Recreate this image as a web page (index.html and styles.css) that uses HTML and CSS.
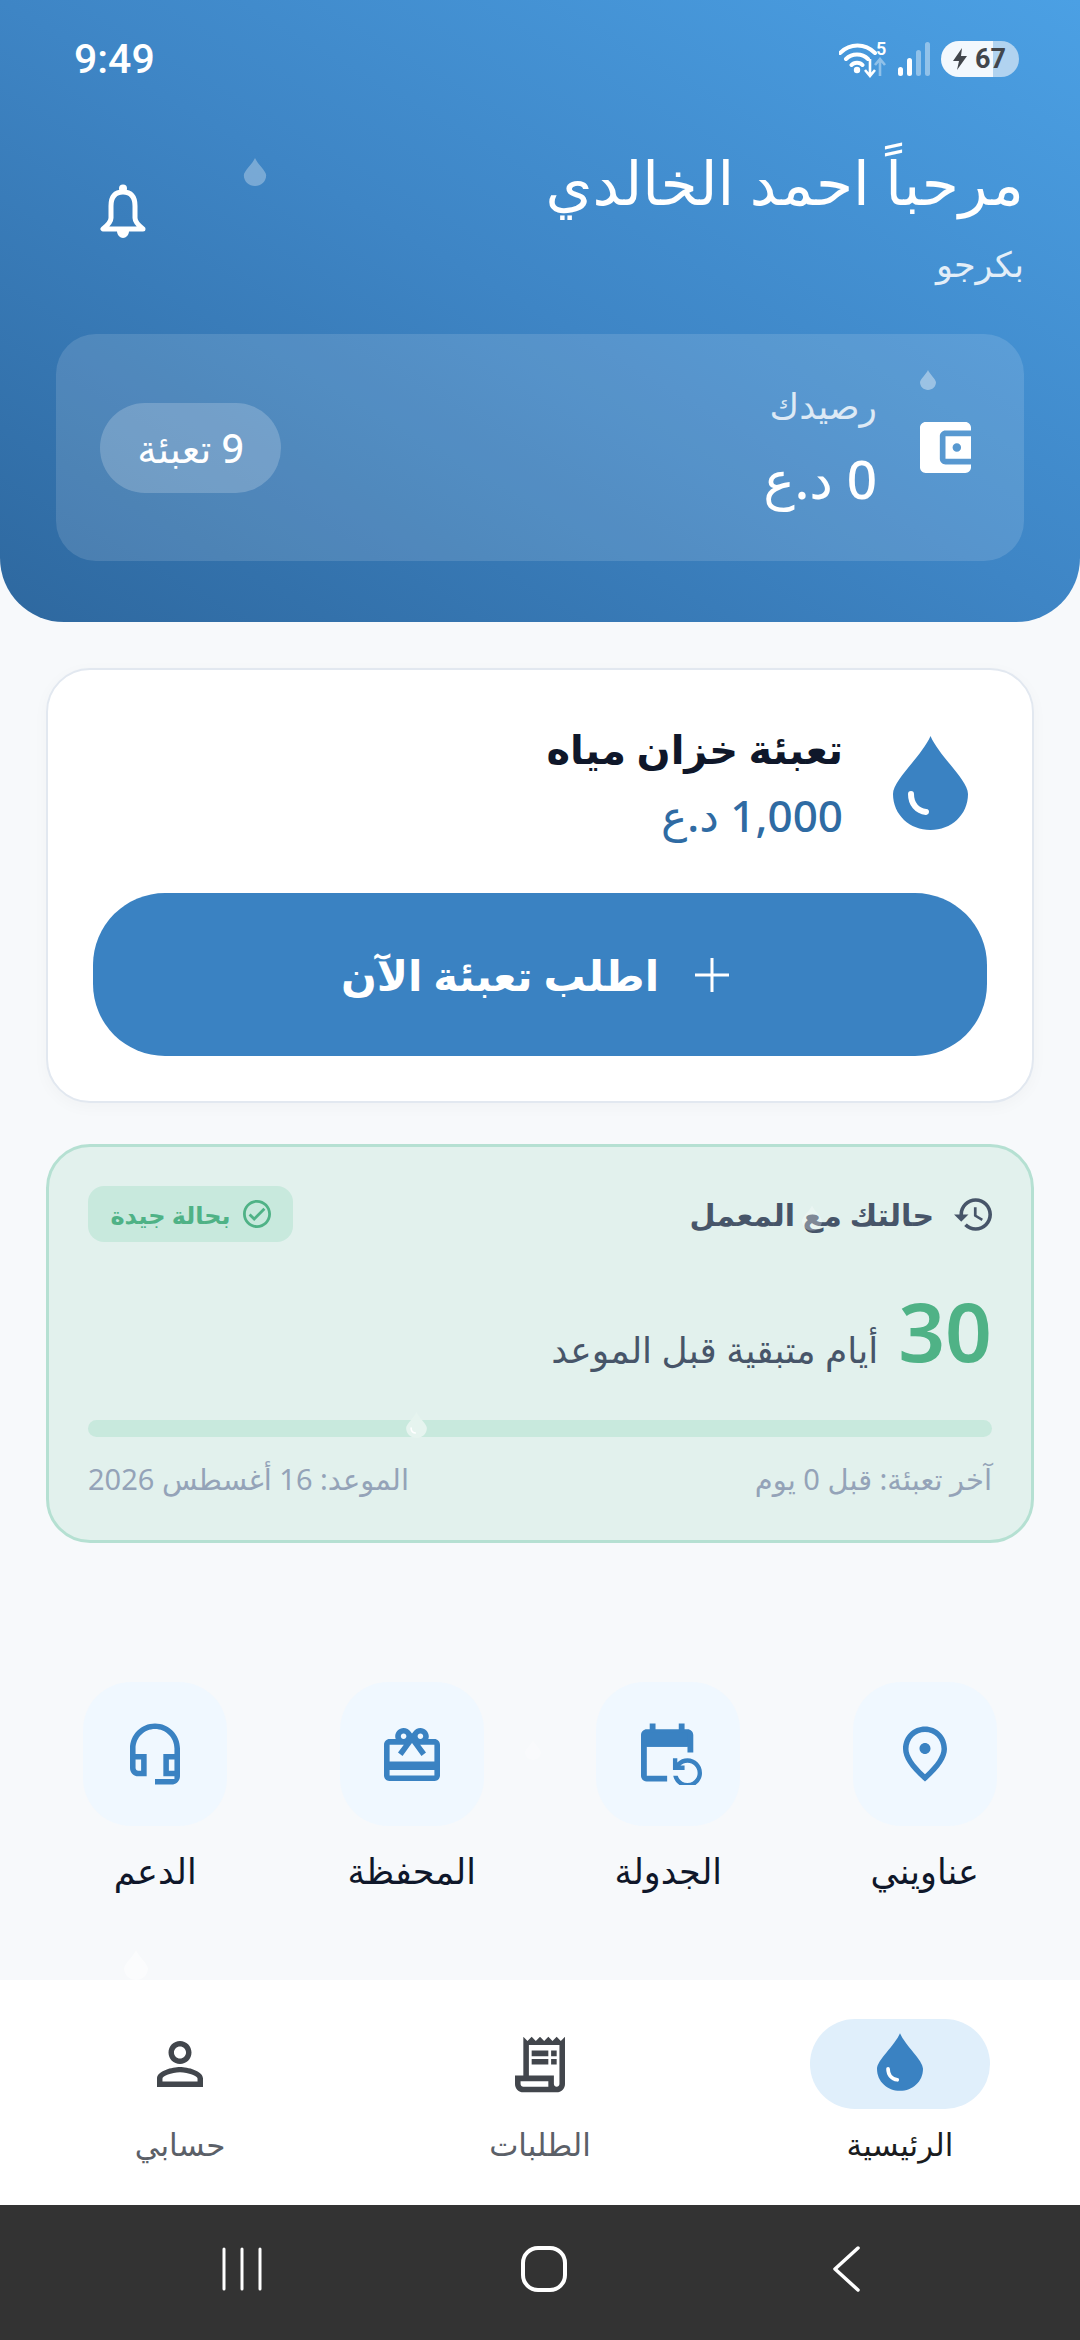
FILE: index.html

```html
<!DOCTYPE html>
<html lang="ar" dir="rtl">
<head>
    <meta charset="UTF-8">
    <meta name="viewport" content="width=device-width, initial-scale=1.0">
    <title>الرئيسية</title>
    <link rel="stylesheet" href="styles.css">
</head>
<body>
    <svg class="defs" width="0" height="0" aria-hidden="true">
        <symbol id="drop" viewBox="0 0 75 94">
            <path fill="currentColor" d="M37.5 0C46 20 75 44 75 58 75 79 58 94 37.5 94 17 94 0 79 0 58 0 44 29 20 37.5 0Z"/>
            <path class="drop-shine" d="M18 58C18 68 24 75 33 76"/>
        </symbol>
    </svg>

    <div class="app">
        <!-- الهيدر -->
        <header class="hero">
            <div class="status-bar">
                <div class="time">9:49</div>
                <div class="status-icons">
                    <svg class="ic-wifi" viewBox="0 0 50 38">
                        <path d="M1 13C11 3 26 3 36 13M7 19C13 13 23 13 29 19M12.500 25C15 22 21 22 23.500 25" fill="none" stroke="#fff" stroke-width="4" stroke-linecap="round"/>
                        <circle cx="18" cy="30" r="3.200" fill="#fff"/>
                        <path d="M31 19V36M26 30L31 36 36 30" fill="none" stroke="#fff" stroke-width="2.600"/>
                        <path d="M41 36V20M36 25L41 19 46 25" fill="none" stroke="#fff" stroke-opacity=".4" stroke-width="2.600"/>
                    </svg>
                    <span class="wifi-num">5</span>
                    <svg class="ic-signal" viewBox="0 0 32 34">
                        <rect x="0" y="25" width="5" height="9" rx="2.500" fill="#fff"/>
                        <rect x="9" y="16" width="5" height="18" rx="2.500" fill="#fff"/>
                        <rect x="18" y="8" width="5" height="26" rx="2.500" fill="#fff" fill-opacity=".4"/>
                        <rect x="27" y="0" width="5" height="34" rx="2.500" fill="#fff" fill-opacity=".4"/>
                    </svg>
                    <div class="battery">
                        <svg class="ic-bolt" viewBox="0 0 14 22"><path d="M9 0L0 13H6L4 22 14 8H8L9 0Z"/></svg>
                        <span>67</span>
                    </div>
                </div>
            </div>

            <div class="greeting">
                <div>
                    <div class="hello">مرحباً احمد الخالدي</div>
                    <div class="city">بكرجو</div>
                </div>
                <svg class="ic-bell" viewBox="0 0 46 54">
                    <path d="M23 8C14 8 11 14 11 22V34C11 38 8 41 3 45H43C38 41 35 38 35 34V22C35 14 32 8 23 8Z" fill="none" stroke="#fff" stroke-width="5" stroke-linejoin="round"/>
                    <circle cx="23" cy="4.500" r="4" fill="#fff"/>
                    <path d="M17 47H29C29 51 26 54 23 54 20 54 17 51 17 47Z" fill="#fff"/>
                </svg>
            </div>

            <div class="balance">
                <div class="balance-main">
                    <svg class="ic-wallet" viewBox="3 3 18 18"><path fill="#fff" d="M21 18v1c0 1.100-.9 2-2 2H5c-1.110 0-2-.9-2-2V5c0-1.100.89-2 2-2h14c1.100 0 2 .9 2 2v1h-9c-1.110 0-2 .9-2 2v8c0 1.100.89 2 2 2h9zm-9-2h9V8h-9v8zm4-2.500c-.83 0-1.500-.67-1.500-1.500s.67-1.500 1.500-1.500 1.500.67 1.500 1.500-.67 1.500-1.500 1.500z"/></svg>
                    <div>
                        <div class="balance-label">رصيدك</div>
                        <div class="balance-value">0 د.ع</div>
                    </div>
                </div>
                <div class="refills">9 تعبئة</div>
            </div>

            <svg class="float-drop fd-1"><use href="#drop"/></svg>
            <svg class="float-drop fd-2"><use href="#drop"/></svg>
        </header>

        <main class="content">
            <!-- بطاقة التعبئة -->
            <section class="card order-card">
                <div class="order-info">
                    <svg class="order-drop"><use href="#drop"/></svg>
                    <div>
                        <div class="order-title">تعبئة خزان مياه</div>
                        <div class="order-price">1,000 د.ع</div>
                    </div>
                </div>
                <button class="order-btn">
                    <svg class="ic-plus" viewBox="0 0 34 34"><path d="M17 0V34M0 17H34" stroke="#fff" stroke-width="3" fill="none"/></svg>
                    <span>اطلب تعبئة الآن</span>
                </button>
            </section>

            <!-- حالة العميل -->
            <section class="status-card">
                <div class="status-head">
                    <div class="status-title">
                        <svg viewBox="1 3 21 18"><path fill="#475569" d="M13 3c-4.970 0-9 4.030-9 9H1l3.890 3.890.07.14L9 12H6c0-3.870 3.130-7 7-7s7 3.130 7 7-3.130 7-7 7c-1.930 0-3.680-.79-4.940-2.060l-1.420 1.420C8.270 19.990 10.510 21 13 21c4.970 0 9-4.030 9-9s-4.030-9-9-9zm-1 5v5l4.280 2.540.72-1.210-3.500-2.080V8H12z"/></svg>
                        <span>حالتك مع المعمل</span>
                    </div>
                    <div class="status-badge">
                        <svg viewBox="2 2 20 20"><path fill="#4fb286" d="M12 2C6.480 2 2 6.480 2 12s4.480 10 10 10 10-4.480 10-10S17.520 2 12 2zm0 18c-4.410 0-8-3.590-8-8s3.590-8 8-8 8 3.590 8 8-3.590 8-8 8zm4.590-12.420L10 14.170l-2.590-2.580L6 13l4 4 8-8z"/></svg>
                        <span>بحالة جيدة</span>
                    </div>
                </div>
                <div class="days">
                    <span class="days-num">30</span>
                    <span class="days-text">أيام متبقية قبل الموعد</span>
                </div>
                <div class="progress"><svg class="progress-drop"><use href="#drop"/></svg></div>
                <div class="status-foot">
                    <span>آخر تعبئة: قبل 0 يوم</span>
                    <span>الموعد: 16 أغسطس 2026</span>
                </div>
                <svg class="float-drop fd-3"><use href="#drop"/></svg>
            </section>

            <!-- الاختصارات -->
            <nav class="quick">
                <div class="quick-item">
                    <div class="tile"><svg viewBox="4 2 16 20" class="ic-place"><path d="M12 12c-1.100 0-2-.9-2-2s.9-2 2-2 2 .9 2 2-.9 2-2 2zm6-1.800C18 6.570 15.350 4 12 4s-6 2.570-6 6.200c0 2.340 1.950 5.440 6 9.140 4.050-3.700 6-6.800 6-9.140zM12 2c4.200 0 8 3.220 8 8.200 0 3.320-2.670 7.250-8 11.800-5.330-4.550-8-8.480-8-11.800C4 5.220 7.800 2 12 2z"/></svg></div>
                    <div class="quick-label">عناويني</div>
                </div>
                <div class="quick-item">
                    <div class="tile"><svg viewBox="3 2 21 21" class="ic-cal"><path d="M21 12V6c0-1.100-.9-2-2-2h-1V2h-2v2H8V2H6v2H5c-1.100 0-2 .9-2 2v14c0 1.100.9 2 2 2h7v-2H5V10h14v2h2zm-5.360 8c.43 1.450 1.770 2.500 3.360 2.500 1.930 0 3.500-1.570 3.500-3.500s-1.570-3.500-3.500-3.500c-.95 0-1.820.38-2.450 1H18V18h-4v-4h1.500v1.430c.9-.88 2.140-1.430 3.500-1.430 2.760 0 5 2.240 5 5s-2.240 5-5 5c-2.420 0-4.440-1.720-4.900-4h1.540z"/><path d="M5 5h14v5H5z"/></svg></div>
                    <div class="quick-label">الجدولة</div>
                </div>
                <div class="quick-item">
                    <div class="tile"><svg viewBox="2 2 20 19" class="ic-gift"><path d="M20 6h-2.180c.11-.31.18-.65.18-1 0-1.660-1.340-3-3-3-1.050 0-1.960.54-2.500 1.350l-.5.67-.5-.68C10.960 2.540 10.050 2 9 2 7.340 2 6 3.340 6 5c0 .35.07.69.18 1H4c-1.110 0-1.990.89-1.990 2L2 19c0 1.110.89 2 2 2h16c1.110 0 2-.89 2-2V8c0-1.110-.89-2-2-2zm-5-2c.55 0 1 .45 1 1s-.45 1-1 1-1-.45-1-1 .45-1 1-1zM9 4c.55 0 1 .45 1 1s-.45 1-1 1-1-.45-1-1 .45-1 1-1zm11 15H4v-2h16v2zm0-5H4V8h5.080L7 10.830 8.620 12 11 8.760l1-1.360 1 1.360L15.380 12 17 10.830 14.920 8H20v6z"/></svg></div>
                    <div class="quick-label">المحفظة</div>
                </div>
                <div class="quick-item">
                    <div class="tile"><svg viewBox="3 1 18 22" class="ic-head"><path d="M12 1c-4.970 0-9 4.030-9 9v7c0 1.660 1.340 3 3 3h3v-8H5v-2c0-3.870 3.130-7 7-7s7 3.130 7 7v2h-4v8h4v1h-7v2h6c1.660 0 3-1.340 3-3V10c0-4.970-4.030-9-9-9zM7 14v4H6c-.55 0-1-.45-1-1v-3h2zm12 4h-2v-4h2v4z"/></svg></div>
                    <div class="quick-label">الدعم</div>
                </div>
            </nav>
            <svg class="float-drop fd-4"><use href="#drop"/></svg>
            <svg class="float-drop fd-5"><use href="#drop"/></svg>
        </main>

        <!-- الشريط السفلي -->
        <nav class="tabbar">
            <div class="tab active">
                <div class="tab-icon"><svg class="tab-drop"><use href="#drop"/></svg></div>
                <div class="tab-label">الرئيسية</div>
            </div>
            <div class="tab">
                <div class="tab-icon"><svg viewBox="3 2 18 20" class="ic-receipt"><path d="M19.500 3.500 18 2l-1.500 1.500L15 2l-1.500 1.500L12 2l-1.500 1.500L9 2 7.500 3.500 6 2v14H3v3c0 1.660 1.340 3 3 3h12c1.660 0 3-1.340 3-3V2l-1.500 1.500zM15 20H6c-.55 0-1-.45-1-1v-1h10v2zm4-1c0 .55-.45 1-1 1s-1-.45-1-1v-3H8V5h11v14z"/><path d="M9 7h6v2H9zm7 0h2v2h-2zm-7 3h6v2H9zm7 0h2v2h-2z"/></svg></div>
                <div class="tab-label">الطلبات</div>
            </div>
            <div class="tab">
                <div class="tab-icon"><svg viewBox="4 4 16 16" class="ic-person"><path d="M12 5.900c1.160 0 2.100.94 2.100 2.100s-.94 2.100-2.100 2.100S9.900 9.160 9.900 8s.94-2.100 2.100-2.100m0 9c2.970 0 6.100 1.460 6.100 2.100v1.100H5.900V17c0-.64 3.130-2.100 6.100-2.100M12 4C9.790 4 8 5.790 8 8s1.790 4 4 4 4-1.790 4-4-1.790-4-4-4zm0 9c-2.670 0-8 1.340-8 4v3h16v-3c0-2.660-5.330-4-8-4z"/></svg></div>
                <div class="tab-label">حسابي</div>
            </div>
        </nav>

        <!-- أزرار النظام -->
        <div class="sys-nav">
            <svg class="sys-recent" viewBox="0 0 40 44"><path d="M2 2V42M20 2V42M38 2V42" stroke="#fff" stroke-width="3" stroke-linecap="round" fill="none"/></svg>
            <svg class="sys-home" viewBox="0 0 46 46"><rect x="2" y="2" width="42" height="42" rx="15" stroke="#fff" stroke-width="4" fill="none"/></svg>
            <svg class="sys-back" viewBox="0 0 27 46"><path d="M25 2L2 23 25 44" stroke="#fff" stroke-width="3.500" stroke-linecap="round" stroke-linejoin="round" fill="none"/></svg>
        </div>
    </div>
</body>
</html>
```

FILE: styles.css

```css
* {
    box-sizing: border-box;
}
body {
    margin: 0;
    background: #f7f9fb;
    font-family: "Noto Sans", "DejaVu Sans", sans-serif;
    color: #0f172a;
}
.defs {
    position: absolute;
}
.drop-shine {
    fill: none;
    stroke: #fff;
    stroke-width: 6;
    stroke-linecap: round;
}
.app {
    width: 1080px;
    height: 2340px;
    display: flex;
    flex-direction: column;
    overflow: hidden;
}

/* Header */
.hero {
    position: relative;
    height: 622px;
    padding: 0 56px;
    border-radius: 0 0 64px 64px;
    background: linear-gradient(to bottom left, #4ba0e4 0%, #3e85c5 50%, #2e689f 100%);
    color: white;
}
.status-bar {
    direction: ltr;
    height: 118px;
    padding: 0 5px 0 18px;
    display: flex;
    justify-content: space-between;
    align-items: center;
}
.time {
    font-family: Roboto, sans-serif;
    font-size: 41px;
    font-weight: 500;
}
.status-icons {
    display: flex;
    align-items: center;
    position: relative;
}
.ic-wifi {
    width: 50px;
    height: 38px;
}
.wifi-num {
    position: absolute;
    left: 37px;
    top: 0;
    font-family: Roboto, sans-serif;
    font-size: 18px;
    line-height: 18px;
    font-weight: 600;
}
.ic-signal {
    width: 32px;
    height: 34px;
    margin: 0 11px 0 9px;
}
.battery {
    width: 78px;
    height: 36px;
    border-radius: 18px;
    background: linear-gradient(90deg, #f3f8fd 67%, #b1d3f0 67%);
    color: #42464c;
    display: flex;
    align-items: center;
    gap: 7px;
    padding-left: 11px;
    font-family: Roboto, sans-serif;
    font-size: 27px;
    font-weight: 700;
}
.ic-bolt {
    width: 16px;
    height: 22px;
    fill: #42464c;
}
.greeting {
    display: flex;
    justify-content: space-between;
    padding: 19px 0 0 44px;
    align-items: center;
}
.hello {
    font-size: 60px;
    line-height: 90px;
}
.city {
    font-size: 35px;
    line-height: 50px;
    margin-top: 12px;
    opacity: .85;
}
.ic-bell {
    width: 46px;
    height: 54px;
    margin-top: -4px;
}
.balance {
    margin-top: 45px;
    height: 227px;
    border-radius: 40px;
    background: rgba(255,255,255,0.13);
    display: flex;
    justify-content: space-between;
    align-items: center;
    padding: 0 52px 0 44px;
}
.balance-main {
    display: flex;
    align-items: center;
    gap: 42px;
}
.ic-wallet {
    width: 53px;
    height: 51px;
}
.balance-label {
    font-size: 36px;
    line-height: 60px;
    opacity: .8;
}
.balance-value {
    margin-top: 3px;
    font-size: 53px;
    line-height: 80px;
    font-weight: 500;
}
.refills {
    width: 181px;
    height: 90px;
    border-radius: 45px;
    background: rgba(255,255,255,0.2);
    display: flex;
    justify-content: center;
    align-items: center;
    font-size: 39px;
    font-weight: 500;
}

/* Floating drops */
.float-drop {
    position: absolute;
    color: white;
    pointer-events: none;
}
.fd-1 {
    left: 243px;
    top: 158px;
    width: 24px;
    height: 28px;
    opacity: .3;
}
.fd-2 {
    left: 920px;
    top: 370px;
    width: 16px;
    height: 20px;
    opacity: .4;
}
.fd-3 {
    left: 753px;
    top: 51px;
    width: 20px;
    height: 40px;
    opacity: .3;
}
.fd-4 {
    left: 524px;
    top: 1118px;
    width: 18px;
    height: 20px;
    opacity: .3;
}
.fd-5 {
    left: 124px;
    top: 1328px;
    width: 24px;
    height: 30px;
    opacity: .5;
}

/* Cards */
.content {
    position: relative;
    flex: 1;
    padding: 46px 46px 0;
}
.card {
    height: 435px;
    border-radius: 44px;
    background: white;
    border: 2px solid #e2e8f0;
    box-shadow: 0 4px 16px rgba(15,23,42,0.03);
    padding: 48px 45px 0;
}
.order-info {
    display: flex;
    align-items: center;
    gap: 50px;
    padding-right: 19px;
}
.order-drop {
    width: 75px;
    height: 94px;
    color: #3a82c2;
}
.order-title {
    font-size: 40px;
    font-weight: 700;
    line-height: 62px;
}
.order-price {
    margin-top: 3px;
    font-size: 44px;
    font-weight: 500;
    color: #2f6ba3;
    line-height: 64px;
}
.order-btn {
    width: 100%;
    height: 163px;
    margin-top: 46px;
    padding: 0 10px 0 0;
    border: none;
    border-radius: 72px;
    background: #3a82c2;
    color: white;
    display: flex;
    justify-content: center;
    align-items: center;
    gap: 36px;
    font-family: inherit;
    font-size: 42px;
    font-weight: 700;
}
.ic-plus {
    width: 34px;
    height: 34px;
}
.status-card {
    position: relative;
    margin-top: 41px;
    height: 399px;
    border-radius: 44px;
    background: #e2f1ed;
    border: 3px solid #b5e0d2;
    padding: 39px 39px 0;
}
.status-head {
    display: flex;
    justify-content: space-between;
    align-items: center;
}
.status-title {
    display: flex;
    align-items: center;
    gap: 20px;
    font-size: 30px;
    font-weight: 600;
    color: #475569;
}
.status-title svg {
    width: 38px;
    height: 33px;
}
.status-badge {
    width: 205px;
    height: 56px;
    border-radius: 16px;
    background: #c8e9dd;
    color: #4fb286;
    display: flex;
    justify-content: center;
    align-items: center;
    gap: 12px;
    font-size: 24px;
    font-weight: 600;
}
.status-badge svg {
    width: 28px;
    height: 28px;
}
.days {
    display: flex;
    align-items: flex-end;
    gap: 20px;
    margin-top: 38px;
}
.days-num {
    font-size: 82px;
    line-height: 100px;
    font-weight: 600;
    color: #4fb286;
}
.days-text {
    font-size: 36px;
    line-height: 60px;
    color: #475569;
}
.progress {
    position: relative;
    margin-top: 40px;
    height: 17px;
    border-radius: 9px;
    background: #c8e9dd;
}
.progress-drop {
    position: absolute;
    left: 318px;
    top: -8px;
    width: 21px;
    height: 26px;
    color: #e6f4ef;
}
.status-foot {
    display: flex;
    justify-content: space-between;
    margin-top: 22px;
    font-size: 29px;
    line-height: 40px;
    color: #94a3b8;
}

/* Shortcuts */
.quick {
    margin: 139px -19px 0;
    display: grid;
    grid-template-columns: repeat(4, 1fr);
}
.quick-item {
    display: flex;
    flex-direction: column;
    align-items: center;
}
.tile {
    width: 144px;
    height: 144px;
    border-radius: 48px;
    background: #f0f8ff;
    display: flex;
    justify-content: center;
    align-items: center;
}
.tile svg {
    fill: #3a82c2;
}
.ic-place {
    width: 44px;
    height: 56px;
}
.ic-cal {
    width: 61px;
    height: 62px;
    margin-right: -6px;
}
.ic-gift {
    width: 56px;
    height: 55px;
}
.ic-head {
    width: 50px;
    height: 62px;
}
.quick-label {
    margin-top: 20px;
    font-size: 35px;
    line-height: 50px;
    color: #0f172a;
}

/* Bottom tabs */
.tabbar {
    position: relative;
    z-index: 1;
    height: 225px;
    background: white;
    display: grid;
    grid-template-columns: repeat(3, 1fr);
    padding-top: 39px;
}
.tab {
    display: flex;
    flex-direction: column;
    align-items: center;
}
.tab-icon {
    width: 180px;
    height: 90px;
    border-radius: 45px;
    display: flex;
    justify-content: center;
    align-items: center;
}
.tab.active .tab-icon {
    background: #e0effb;
}
.tab-drop {
    width: 46px;
    height: 58px;
    margin-top: -4px;
    color: #3a82c2;
}
.ic-receipt {
    width: 50px;
    height: 57px;
    fill: #42464c;
}
.ic-person {
    width: 46px;
    height: 46px;
    fill: #42464c;
}
.tab-label {
    margin-top: 12px;
    font-size: 31px;
    line-height: 46px;
    color: #5b6068;
}
.tab.active .tab-label {
    color: #1a1c20;
}

/* System navigation */
.sys-nav {
    direction: ltr;
    height: 135px;
    background: #333333;
    display: flex;
    align-items: center;
    padding: 0 0 7px 222px;
}
.sys-recent {
    width: 40px;
    height: 44px;
}
.sys-home {
    width: 46px;
    height: 46px;
    margin: 0 266px 0 259px;
}
.sys-back {
    width: 27px;
    height: 46px;
}
```
